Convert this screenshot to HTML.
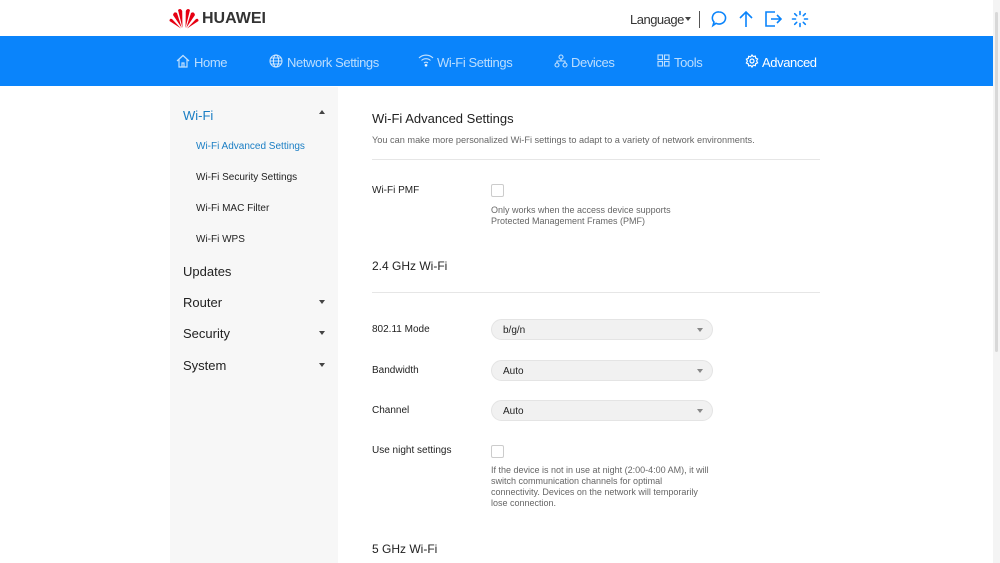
<!DOCTYPE html>
<html><head><meta charset="utf-8"><style>
*{margin:0;padding:0;box-sizing:border-box}
body{width:1000px;height:563px;overflow:hidden;background:#fff;font-family:"Liberation Sans",Arial,sans-serif;position:relative;color:#222}
.a{position:absolute;white-space:nowrap}
.nav{position:absolute;left:0;top:36px;width:993px;height:50px;background:#0a84fb}
.ni{position:absolute;top:19px;font-size:13px;color:rgba(255,255,255,.72);letter-spacing:-.4px}
.side{position:absolute;left:170px;top:87px;width:168px;height:476px;background:#f7f7f7}
.s1{font-size:13px;color:#222}
.s2{font-size:10px;color:#222}
.lbl{font-size:10px;color:#222}
.desc{font-size:9px;color:#666;line-height:11px;white-space:normal}
.cb{position:absolute;width:13px;height:13px;border:1px solid #ccc;border-radius:2px;background:#fff}
.sel{position:absolute;left:491px;width:222px;height:21px;border-radius:11px;background:#f1f1f1;border:1px solid #e4e4e4;font-size:10px;padding:5px 0 0 11px;color:#222}
.sel:after{content:"";position:absolute;right:9px;top:8px;border:3px solid transparent;border-top:4px solid #888}
.hr{position:absolute;left:372px;width:448px;height:1px;background:#e6e6e6}
.car{position:absolute;border:3px solid transparent}
.dn{border-top:4px solid #444}
</style></head><body>
<svg class="a" style="left:169px;top:7px" width="30" height="22" viewBox="0 0 30 22">
<g fill="#e60012">
<path d="M13.5 21 L9 3 Q11.5 0.5 13.2 4 Z"/><path d="M16.5 21 L21 3 Q18.5 0.5 16.8 4 Z"/>
<path d="M12.8 21 L4 8 Q5 4 8 6 Z"/><path d="M17.2 21 L26 8 Q25 4 22 6 Z"/>
<path d="M12 21.5 L0.5 14 Q0.5 11 3 12 Z"/><path d="M18 21.5 L29.5 14 Q29.5 11 27 12 Z"/>
</g></svg>
<div class="a" style="left:202px;top:10px;font-size:16px;font-weight:bold;color:#333">HUAWEI</div>
<div class="a" style="left:630px;top:12px;font-size:13px;color:#333;letter-spacing:-.5px">Language</div>
<div class="car dn" style="left:685px;top:17px"></div>
<div class="a" style="left:699px;top:11px;width:1px;height:17px;background:#555"></div>
<svg class="a" style="left:710px;top:10px" width="18" height="18" viewBox="0 0 18 18" fill="none" stroke="#0a84fb" stroke-width="1.6"><path d="M9 2a6.5 6 0 1 1-3 11.3L3 15.5l1-3.4A6 6 0 0 1 9 2z"/></svg>
<svg class="a" style="left:737px;top:10px" width="18" height="18" viewBox="0 0 18 18" fill="none" stroke="#0a84fb" stroke-width="1.6"><path d="M9 17V2M3 8l6-6 6 6"/></svg>
<svg class="a" style="left:764px;top:10px" width="18" height="18" viewBox="0 0 18 18" fill="none" stroke="#0a84fb" stroke-width="1.6"><path d="M11 2H2v14h9M7 9h10M13 5l4 4-4 4"/></svg>
<svg class="a" style="left:791px;top:10px" width="18" height="18" viewBox="0 0 18 18" fill="none" stroke="#0a84fb" stroke-width="1.6" stroke-linecap="round"><path d="M9 1.5v3M9 13.5v3M1.5 9h3M13.5 9h3M3.7 3.7l2 2M12.3 12.3l2 2M3.7 14.3l2-2M12.3 5.7l2-2"/></svg>
<div class="a" style="left:993px;top:0;width:7px;height:563px;background:#f4f4f4"></div>
<div class="a" style="left:995px;top:12px;width:3px;height:340px;background:#d8d8d8;border-radius:2px"></div>
<div class="nav">
<svg class="a" style="left:176px;top:18px" width="14" height="14" viewBox="0 0 14 14" fill="none" stroke="rgba(255,255,255,.75)" stroke-width="1.2"><path d="M1 7L7 1.5 13 7M3 5.5V13h8V5.5M6 13V9h2v4"/></svg>
<div class="ni" style="left:194px">Home</div>
<svg class="a" style="left:269px;top:18px" width="14" height="14" viewBox="0 0 14 14" fill="none" stroke="rgba(255,255,255,.75)" stroke-width="1.1"><circle cx="7" cy="7" r="6"/><ellipse cx="7" cy="7" rx="2.6" ry="6"/><path d="M1 7h12M2 4h10M2 10h10"/></svg>
<div class="ni" style="left:287px">Network Settings</div>
<svg class="a" style="left:418px;top:17px" width="16" height="14" viewBox="0 0 16 14" fill="none" stroke="rgba(255,255,255,.75)" stroke-width="1.2"><path d="M1 5a10 10 0 0 1 14 0M3.5 7.5a6.5 6.5 0 0 1 9 0M6 10a3 3 0 0 1 4 0"/><circle cx="8" cy="12.3" r=".8" fill="#fff"/></svg>
<div class="ni" style="left:437px">Wi-Fi Settings</div>
<svg class="a" style="left:554px;top:18px" width="14" height="14" viewBox="0 0 14 14" fill="none" stroke="rgba(255,255,255,.75)" stroke-width="1.1"><circle cx="7" cy="3" r="2"/><circle cx="3" cy="11" r="2"/><circle cx="11" cy="11" r="2"/><path d="M7 5v2M3 9V7h8v2"/></svg>
<div class="ni" style="left:571px">Devices</div>
<svg class="a" style="left:657px;top:18px" width="13" height="13" viewBox="0 0 13 13" fill="none" stroke="rgba(255,255,255,.75)" stroke-width="1.1"><rect x="1" y="1" width="4.5" height="4.5"/><rect x="7.5" y="1" width="4.5" height="4.5"/><rect x="1" y="7.5" width="4.5" height="4.5"/><rect x="7.5" y="7.5" width="4.5" height="4.5"/></svg>
<div class="ni" style="left:674px">Tools</div>
<svg class="a" style="left:745px;top:18px" width="14" height="14" viewBox="0 0 14 14" fill="none" stroke="#fff" stroke-width="1.2"><circle cx="7" cy="7" r="2"/><path d="M7 1l1.3 1.6 2-.5.4 2 1.9.9-1 1.9 1 1.9-1.9.9-.4 2-2-.5L7 13l-1.3-1.6-2 .5-.4-2-1.9-.9 1-1.9-1-1.9 1.9-.9.4-2 2 .5z"/></svg>
<div class="ni" style="left:762px;color:#fff">Advanced</div>
</div>
<div class="side"></div>
<div class="a s1" style="left:183px;top:108px;color:#1a7ec4">Wi-Fi</div>
<div class="car" style="left:319px;top:110px;border-bottom:4px solid #444;border-top:0"></div>
<div class="a s2" style="left:196px;top:141px;color:#1a7ec4">Wi-Fi Advanced Settings</div>
<div class="a s2" style="left:196px;top:172px">Wi-Fi Security Settings</div>
<div class="a s2" style="left:196px;top:203px">Wi-Fi MAC Filter</div>
<div class="a s2" style="left:196px;top:234px">Wi-Fi WPS</div>
<div class="a s1" style="left:183px;top:264px">Updates</div>
<div class="a s1" style="left:183px;top:295px">Router</div>
<div class="car dn" style="left:319px;top:300px"></div>
<div class="a s1" style="left:183px;top:326px">Security</div>
<div class="car dn" style="left:319px;top:331px"></div>
<div class="a s1" style="left:183px;top:358px">System</div>
<div class="car dn" style="left:319px;top:363px"></div>

<div class="a" style="left:372px;top:111px;font-size:13px">Wi-Fi Advanced Settings</div>
<div class="a" style="left:372px;top:135px;font-size:9.2px;color:#666">You can make more personalized Wi-Fi settings to adapt to a variety of network environments.</div>
<div class="hr" style="top:159px"></div>
<div class="a lbl" style="left:372px;top:185px">Wi-Fi PMF</div>
<div class="cb" style="left:491px;top:184px"></div>
<div class="a desc" style="left:491px;top:205px;width:200px">Only works when the access device supports Protected Management Frames (PMF)</div>
<div class="a" style="left:372px;top:259px;font-size:12px">2.4 GHz Wi-Fi</div>
<div class="hr" style="top:292px"></div>
<div class="a lbl" style="left:372px;top:324px">802.11 Mode</div>
<div class="sel" style="top:319px">b/g/n</div>
<div class="a lbl" style="left:372px;top:365px">Bandwidth</div>
<div class="sel" style="top:360px">Auto</div>
<div class="a lbl" style="left:372px;top:405px">Channel</div>
<div class="sel" style="top:400px">Auto</div>
<div class="a lbl" style="left:372px;top:445px">Use night settings</div>
<div class="cb" style="left:491px;top:445px"></div>
<div class="a desc" style="left:491px;top:465px;width:222px">If the device is not in use at night (2:00-4:00 AM), it will switch communication channels for optimal connectivity. Devices on the network will temporarily lose connection.</div>
<div class="a" style="left:372px;top:542px;font-size:12px">5 GHz Wi-Fi</div>
</body></html>
